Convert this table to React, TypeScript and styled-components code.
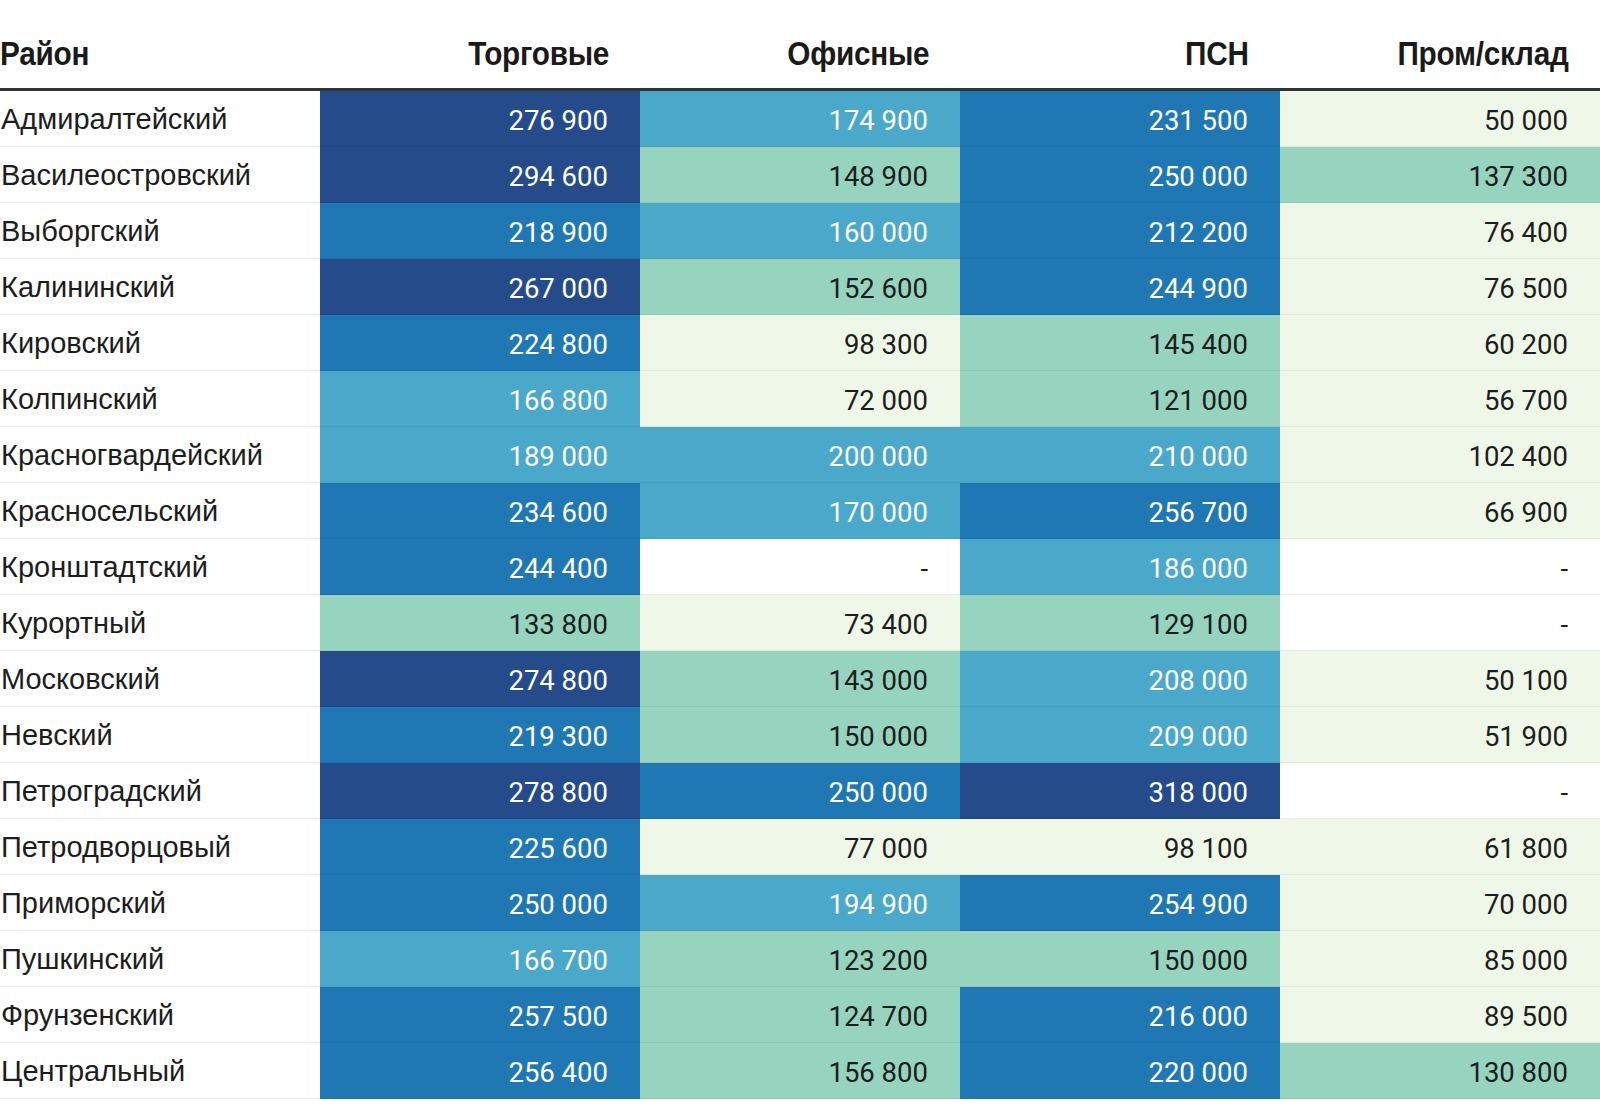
import styled, { createGlobalStyle } from 'styled-components';

const GlobalStyle = createGlobalStyle`
    html, body {
        margin: 0;
        padding: 0;
        background: #ffffff;
    }
`;

type Tone = 'none' | 'pale' | 'mint' | 'sky' | 'blue' | 'navy';

const palette: Record<Tone, { bg: string; fg: string }> = {
    none: { bg: '#ffffff', fg: '#1d1d1d' },
    pale: { bg: '#eff8e8', fg: '#1d1d1d' },
    mint: { bg: '#97d4c0', fg: '#1d1d1d' },
    sky: { bg: '#4aa8cb', fg: '#ffffff' },
    blue: { bg: '#1f78b4', fg: '#ffffff' },
    navy: { bg: '#254b8b', fg: '#ffffff' },
};

const columns = ['Торговые', 'Офисные', 'ПСН', 'Пром/склад'];

type Cell = [number | null, Tone];
type Row = { name: string; cells: Cell[] };

const rows: Row[] = [
    { name: 'Адмиралтейский', cells: [[276900, 'navy'], [174900, 'sky'], [231500, 'blue'], [50000, 'pale']] },
    { name: 'Василеостровский', cells: [[294600, 'navy'], [148900, 'mint'], [250000, 'blue'], [137300, 'mint']] },
    { name: 'Выборгский', cells: [[218900, 'blue'], [160000, 'sky'], [212200, 'blue'], [76400, 'pale']] },
    { name: 'Калининский', cells: [[267000, 'navy'], [152600, 'mint'], [244900, 'blue'], [76500, 'pale']] },
    { name: 'Кировский', cells: [[224800, 'blue'], [98300, 'pale'], [145400, 'mint'], [60200, 'pale']] },
    { name: 'Колпинский', cells: [[166800, 'sky'], [72000, 'pale'], [121000, 'mint'], [56700, 'pale']] },
    { name: 'Красногвардейский', cells: [[189000, 'sky'], [200000, 'sky'], [210000, 'sky'], [102400, 'pale']] },
    { name: 'Красносельский', cells: [[234600, 'blue'], [170000, 'sky'], [256700, 'blue'], [66900, 'pale']] },
    { name: 'Кронштадтский', cells: [[244400, 'blue'], [null, 'none'], [186000, 'sky'], [null, 'none']] },
    { name: 'Курортный', cells: [[133800, 'mint'], [73400, 'pale'], [129100, 'mint'], [null, 'none']] },
    { name: 'Московский', cells: [[274800, 'navy'], [143000, 'mint'], [208000, 'sky'], [50100, 'pale']] },
    { name: 'Невский', cells: [[219300, 'blue'], [150000, 'mint'], [209000, 'sky'], [51900, 'pale']] },
    { name: 'Петроградский', cells: [[278800, 'navy'], [250000, 'blue'], [318000, 'navy'], [null, 'none']] },
    { name: 'Петродворцовый', cells: [[225600, 'blue'], [77000, 'pale'], [98100, 'pale'], [61800, 'pale']] },
    { name: 'Приморский', cells: [[250000, 'blue'], [194900, 'sky'], [254900, 'blue'], [70000, 'pale']] },
    { name: 'Пушкинский', cells: [[166700, 'sky'], [123200, 'mint'], [150000, 'mint'], [85000, 'pale']] },
    { name: 'Фрунзенский', cells: [[257500, 'blue'], [124700, 'mint'], [216000, 'blue'], [89500, 'pale']] },
    { name: 'Центральный', cells: [[256400, 'blue'], [156800, 'mint'], [220000, 'blue'], [130800, 'mint']] },
];

const format = (v: number | null) => {
    if (v === null) return '-';
    const s = String(v);
    return `${s.slice(0, -3)} ${s.slice(-3)}`;
};

const Table = styled.div`
    display: grid;
    grid-template-columns: repeat(5, 1fr);
    width: 1600px;
    font-family: 'Liberation Sans', Arial, sans-serif;
`;

const HeadCell = styled.div<{ $align: 'left' | 'right' }>`
    height: 91px;
    box-sizing: border-box;
    display: flex;
    align-items: center;
    justify-content: ${(p) => (p.$align === 'left' ? 'flex-start' : 'flex-end')};
    padding: 18px ${(p) => (p.$align === 'left' ? '0' : '31px')} 0 0;
    border-bottom: 3px solid #333333;
`;

// the source uses a condensed bold face; squeeze Liberation Sans Bold to match
const HeadLabel = styled.span<{ $align: 'left' | 'right' }>`
    display: inline-block;
    font-family: 'Liberation Sans', Arial, sans-serif;
    font-weight: 700;
    font-size: 34px;
    letter-spacing: -0.3px;
    color: #1a1a1a;
    transform: scaleX(0.875);
    transform-origin: ${(p) => (p.$align === 'left' ? 'left' : 'right')} center;
`;

const NameCell = styled.div`
    height: 56px;
    box-sizing: border-box;
    display: flex;
    align-items: center;
    padding: 1px 0 0 1px;
    border-bottom: 1.5px solid #ececec;
    font-size: 29px;
    color: #1d1d1d;
`;

const ValueCell = styled.div<{ $tone: Tone }>`
    height: 56px;
    box-sizing: border-box;
    display: flex;
    align-items: center;
    justify-content: flex-end;
    padding: 3px 32px 0 0;
    background: ${(p) => palette[p.$tone].bg};
    color: ${(p) => palette[p.$tone].fg};
    border-bottom: 1.5px solid
        ${(p) => (p.$tone === 'none' ? '#ececec' : 'rgba(0, 0, 0, 0.06)')};
    font-family: Roboto, 'Liberation Sans', sans-serif;
    font-size: 27.5px;
`;

export default function App() {
    return (
        <>
            <GlobalStyle />
            <Table>
                <HeadCell $align="left">
                    <HeadLabel $align="left">Район</HeadLabel>
                </HeadCell>
                {columns.map((c) => (
                    <HeadCell key={c} $align="right">
                        <HeadLabel $align="right">{c}</HeadLabel>
                    </HeadCell>
                ))}
                {rows.map((row) => (
                    <RowCells key={row.name} row={row} />
                ))}
            </Table>
        </>
    );
}

function RowCells({ row }: { row: Row }) {
    return (
        <>
            <NameCell>{row.name}</NameCell>
            {row.cells.map(([v, tone], i) => (
                <ValueCell key={i} $tone={tone}>
                    {format(v)}
                </ValueCell>
            ))}
        </>
    );
}
